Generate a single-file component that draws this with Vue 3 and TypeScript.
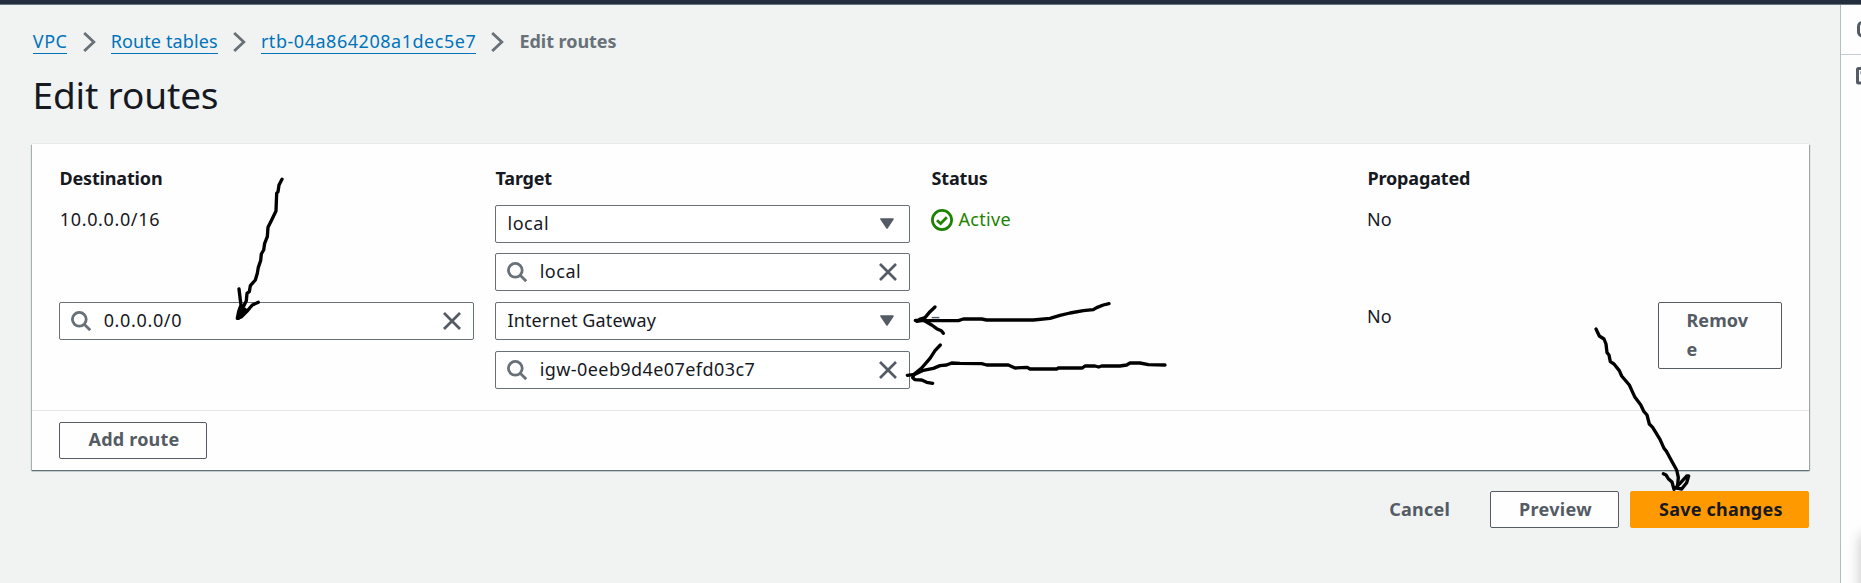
<script setup lang="ts">
interface Field { kind: 'select' | 'search'; value: string; tone: string }
interface Route {
  destination: string
  editable: boolean
  target: Field[]
  status: string
  propagated: string
}

const crumbs = [
  { label: 'VPC', tone: 'wide' },
  { label: 'Route tables', tone: 'snug' },
  { label: 'rtb-04a864208a1dec5e7', tone: 'wide' },
]
const columns = ['Destination', 'Target', 'Status', 'Propagated']
const routes: Route[] = [
  {
    destination: '10.0.0.0/16',
    editable: false,
    target: [
      { kind: 'select', value: 'local', tone: 'wide' },
      { kind: 'search', value: 'local', tone: 'wide' },
    ],
    status: 'Active',
    propagated: 'No',
  },
  {
    destination: '0.0.0.0/0',
    editable: true,
    target: [
      { kind: 'select', value: 'Internet Gateway', tone: 'snug' },
      { kind: 'search', value: 'igw-0eeb9d4e07efd03c7', tone: 'medium' },
    ],
    status: '–',
    propagated: 'No',
  },
]
</script>

<template>
  <div class="page">
    <div class="topbar"></div>
    <div class="body">
      <main class="content">
        <nav class="crumbs">
          <template v-for="c in crumbs" :key="c.label">
            <a :class="c.tone">{{ c.label }}</a>
            <svg class="chev" width="13" height="20" viewBox="0 0 13 20"><path d="M1.2 1 10.8 10 1.2 19" /></svg>
          </template>
          <span class="current">Edit routes</span>
        </nav>
        <h1>Edit routes</h1>

        <section class="panel">
          <div class="table">
            <div class="row head">
              <div v-for="c in columns" :key="c">{{ c }}</div>
            </div>
            <div v-for="r in routes" :key="r.destination" class="row">
              <div>
                <div v-if="r.editable" class="field">
                  <svg class="search" viewBox="0 0 20 20"><circle cx="8.3" cy="8.3" r="6.9" /><path d="m13.2 13.2 6 6" /></svg>
                  <span class="digits">{{ r.destination }}</span>
                  <svg class="close" viewBox="0 0 18 18"><path d="m1 1 16 16M17 1 1 17" /></svg>
                </div>
                <span v-else class="digits cidr">{{ r.destination }}</span>
              </div>
              <div class="stack" :class="{ tight: !r.editable }">
                <div v-for="f in r.target" :key="f.kind" class="field">
                  <svg v-if="f.kind === 'search'" class="search" viewBox="0 0 20 20"><circle cx="8.3" cy="8.3" r="6.9" /><path d="m13.2 13.2 6 6" /></svg>
                  <span :class="f.tone">{{ f.value }}</span>
                  <svg v-if="f.kind === 'search'" class="close" viewBox="0 0 18 18"><path d="m1 1 16 16M17 1 1 17" /></svg>
                  <svg v-else class="caret" viewBox="0 0 14 11"><path d="M1 1h12L7 10z" /></svg>
                </div>
              </div>
              <div>
                <span v-if="r.status === 'Active'" class="active">
                  <svg viewBox="0 0 22 22"><circle cx="11" cy="11" r="9.6" /><path d="m6 11.3 3.6 3.4 6.2-6.5" /></svg>
                  {{ r.status }}
                </span>
                <span v-else class="none">{{ r.status }}</span>
              </div>
              <div>{{ r.propagated }}</div>
              <div v-if="r.editable"><button class="btn remove">Remove</button></div>
            </div>
          </div>
          <div class="foot"><button class="btn add">Add route</button></div>
        </section>

        <div class="actions">
          <button class="btn link">Cancel</button>
          <button class="btn preview">Preview</button>
          <button class="btn primary">Save changes</button>
        </div>
      </main>

      <aside class="rail">
        <div class="rail-cell top">
          <svg width="18" height="18" viewBox="0 0 18 18"><rect x="1.5" y="1.5" width="15" height="13.4" rx="4" /></svg>
        </div>
        <div class="rail-cell">
          <svg width="18" height="18" viewBox="0 0 18 18"><rect x="1.5" y="1.5" width="15" height="14.4" rx="1" /><path d="M4.5 5.8h9" /></svg>
        </div>
        <div class="edge-shade"></div>
      </aside>
    </div>

    <!-- hand-drawn pointers over the form -->
    <svg class="ink" viewBox="0 0 1861 583">
      <g transform="translate(20 140) scale(.33333)">
        <path d="M786 118 777 135 774 155 770 160 768 213 755 240 744 262 742 290 734 310 731 330 724 342 722 362 715 382 712 400 706 420 691 437 688 455 681 460 679 482 670 500 655 535" />
        <path d="M657 447 661 480 663 495 656 515 652 535 665 530 680 515 697 495 715 487M664 495 662 520 675 508 668 525" />
      </g>
      <g transform="translate(900 140) scale(.33333)">
        <path d="M627 491 610 495 590 503 580 509 550 512 510 519 480 526 450 535 400 540 260 540 245 537 190 537 175 542 70 542 46 541" />
        <path d="M105 501 90 515 75 533 60 537 50 544 70 540 95 555 110 566 124 572 130 580" />
        <path d="M795 675 745 674 720 669 690 669 680 675 660 678 605 678 596 681 585 678 555 678 547 684 475 684 470 687 390 687 382 682 345 684 325 675 260 675 245 671 180 670 155 669 140 675 120 677 100 685 70 691 45 703 22 706" />
        <path d="M121 615 105 632 90 655 65 684 42 703 38 713 45 719 65 720 80 727 98 730" />
      </g>
      <g transform="translate(1340 140) scale(.33333)">
        <path d="M768 567 778 588 792 597 798 612 801 638 807 645 811 665 822 672 838 692 845 708 868 735 878 757 885 772 902 794 912 815 921 825 928 852 938 862 960 898 972 925 980 935 995 963 1010 990 1015 1012 1012 1045" />
        <path d="M970 1001 978 1005 985 1016 996 1026 1002 1048 1020 1030 1040 1008 1046 1008 1040 1028 1025 1047 1015 1045" />
      </g>
    </svg>
  </div>
</template>

<style>
body { margin: 0; }
</style>

<style scoped>
.page {
  position: relative;
  width: 1861px;
  height: 583px;
  overflow: hidden;
  display: flex;
  flex-direction: column;
  background: #f0f3f2;
  color: #16191f;
  font: 400 18px/29px "Noto Sans", sans-serif;
}
.topbar { height: 4px; flex: none; background: #232f3e; border-bottom: 1px solid #687482; }
.body { flex: 1; min-height: 0; display: flex; }
.content { flex: 1; min-width: 0; padding: 22px 31px 0 32px; }
svg { fill: none; flex: none; }

.wide { letter-spacing: .53px; }
.medium { letter-spacing: .42px; }
.snug { letter-spacing: .12px; }
.digits { letter-spacing: .64px; }

.crumbs { display: flex; height: 30px; align-items: flex-start; gap: 15.6px; padding-left: .8px; }
.crumbs a { color: #0073bb; height: 26px; border-bottom: 1px solid #0073bb; }
.chev { margin: 5px -.5px 0; stroke: #687078; stroke-width: 2.8; }
.current { font-weight: 700; letter-spacing: -.05px; color: #687078; }
h1 { margin: 13px 0 0 .5px; font: 400 37px/50px "Noto Sans", sans-serif; letter-spacing: -.15px; }

.panel {
  margin-top: 24px;
  height: 326px;
  box-sizing: border-box;
  background: #fefefe;
  display: flex;
  flex-direction: column;
  box-shadow: 0 1px 1px 0 #5f7377, 1px 1px 1px 0 rgba(0, 28, 36, .3), -1px 1px 1px 0 rgba(0, 28, 36, .25), 0 -1px 0 0 #e6eae9;
}
.table { flex: 1; padding: 20px 27px 0; }
.row { display: grid; grid-template-columns: 415px 415px 415px 270px 124px; column-gap: 21px; height: 97px; }
.row.head { height: 41px; font-weight: 700; letter-spacing: -.17px; }
.row.head > div { padding-left: .5px; }
.row > div { min-width: 0; }
.cidr { margin-left: .8px; }
.stack { display: flex; flex-direction: column; gap: 11px; }
.stack.tight { gap: 10px; }
.field {
  box-sizing: border-box;
  height: 38px;
  border: 1px solid #687078;
  border-radius: 2px;
  padding: 0 12px 2px 11.5px;
  display: flex;
  align-items: center;
  background: #fff;
}
.field span { line-height: 34px; white-space: nowrap; }
.search { width: 20px; height: 20px; margin: 1px 12.7px 0 -.5px; stroke: #687078; stroke-width: 2.8; }
.close { width: 18px; height: 18px; margin: 2px 0 0 auto; stroke: #545b64; stroke-width: 2.7; }
.caret { width: 14px; height: 11px; margin: 1px 3.5px 0 auto; fill: #545b64; stroke: #545b64; stroke-width: 1.6; stroke-linejoin: round; }
.active { display: flex; align-items: center; gap: 5.5px; color: #1d8102; letter-spacing: .3px; }
.active svg { width: 22px; height: 22px; stroke: #1d8102; stroke-width: 2.7; }
.none { color: #545b64; }

.foot { height: 60px; box-sizing: border-box; border-top: 1px solid #e4e8e8; padding: 11px 27px 0; }
.btn {
  box-sizing: border-box;
  height: 37px;
  padding: 2px 27px 4px;
  border: 1px solid #545b64;
  border-radius: 2px;
  background: #fefefe;
  color: #545b64;
  font: 700 18px/29px "Noto Sans", sans-serif;
  letter-spacing: .22px;
  display: block;
  white-space: nowrap;
}
.add { width: 148px; padding-left: 28px; padding-right: 26px; }
.remove { width: 124px; height: 67px; padding: 3px 28px 4px 27.5px; text-align: left; white-space: normal; word-break: break-all; letter-spacing: .05px; }
.actions { display: flex; justify-content: flex-end; margin-top: 21px; }
.actions .btn { padding: 3px 26px 3px 28px; }
.actions .link { border-color: transparent; background: transparent; margin-right: 12px; padding-right: 27px; }
.actions .preview { width: 129px; letter-spacing: .3px; margin-right: 11px; }
.actions .primary { width: 179px; background: #ff9900; border-color: #ff9900; color: #16191f; }

.rail { position: relative; width: 20px; box-sizing: content-box; border-left: 1px solid #b4bec2; background: #fefefe; overflow: hidden; flex: none; }
.rail-cell { height: 45px; padding: 12px 0 0 15px; }
.rail-cell.top { height: 33px; padding: 16px 0 0 16px; border-bottom: 1px solid #c5cdd0; }
.rail-cell svg { display: block; stroke: #545b64; stroke-width: 3; }
.edge-shade { position: absolute; left: 21px; top: 531px; width: 20px; height: 80px; box-shadow: 0 0 14px 1px rgba(0, 0, 0, .24); }

.ink { position: absolute; inset: 0; width: 1861px; height: 583px; pointer-events: none; }
.ink path { stroke: #000; stroke-width: 10; stroke-linecap: round; stroke-linejoin: round; }
</style>
